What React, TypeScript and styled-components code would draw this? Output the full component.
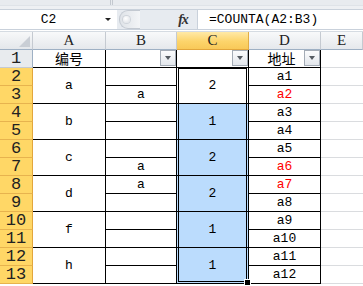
import React from "react";
import styled, { createGlobalStyle } from "styled-components";

const MONO = `"Liberation Mono", "Noto Sans CJK SC", monospace`;

const GlobalStyle = createGlobalStyle`
  html, body {
    margin: 0;
    padding: 0;
    background: #ffffff;
  }
  body {
    font-family: ${MONO};
  }
`;

const Page = styled.div`
  width: 363px;
  height: 286px;
  overflow: hidden;
  display: flex;
  flex-direction: column;
  background: #ffffff;
`;

// ribbon bottom edge
const RibbonEdge = styled.div`
  height: 9px;
  display: flex;
  flex-direction: column;
  background: #eef0f3;
`;

const RibbonGroups = styled.div`
  height: 5px;
  display: flex;
  background: #e8ebef;
  border-bottom: 1px solid #dfe3e8;
`;

const RibbonGroup = styled.div<{ $w: number }>`
  width: ${(p) => p.$w}px;
  border-right: 1px solid #c3c8cf;
  flex-shrink: 0;
`;

const FormulaBar = styled.div`
  height: 21px;
  display: flex;
  align-items: stretch;
  background: #e7ebf0;
  border-top: 1px solid #c9d1db;
  border-bottom: 1px solid #c9d1db;
  box-sizing: border-box;
`;

const NameBox = styled.div`
  width: 117px;
  display: flex;
  align-items: center;
  background: #ffffff;
  font-size: 13px;
  color: #000;
`;

const NameText = styled.span`
  flex: 1;
  text-align: center;
  padding-right: 8px;
`;

const SmallArrow = styled.span`
  width: 0;
  height: 0;
  margin-right: 6px;
  border-left: 3px solid transparent;
  border-right: 3px solid transparent;
  border-top: 3px solid #222;
`;

const Splitter = styled.div`
  width: 17px;
  margin: 0 0 0 2px;
  border-radius: 9px 0 0 9px;
  border: 1px solid #c3c9d1;
  border-right: none;
  background: linear-gradient(90deg, #dfe3e8, #f3f5f7);
  display: flex;
  align-items: center;
  justify-content: flex-start;
  padding-left: 3px;

  &::after {
    content: "";
    width: 7px;
    height: 7px;
    border-radius: 50%;
    background: radial-gradient(circle at 40% 35%, #ffffff, #d9dde3);
    box-shadow: 0 0 0 1px #cfd4da;
  }
`;

const FxButton = styled.div`
  margin-left: auto;
  width: 28px;
  display: flex;
  align-items: center;
  justify-content: center;
  font-family: "Liberation Serif", serif;
  font-style: italic;
  font-weight: bold;
  font-size: 14px;
  color: #333;
  letter-spacing: -1px;
`;

const FormulaInput = styled.div`
  width: 166px;
  display: flex;
  align-items: center;
  padding-left: 11px;
  box-sizing: border-box;
  background: #ffffff;
  border-left: 1px solid #c9d1db;
  font-size: 13px;
  color: #000;
  white-space: nowrap;
`;

const BarGap = styled.div`
  height: 2px;
  background: #ffffff;
  border-bottom: 1px solid #d5dbe2;
  box-sizing: border-box;
`;

const Sheet = styled.div`
  position: relative;
  display: grid;
  grid-template-columns: 33px 73px 71px 72px 72px 1fr;
  grid-template-rows: repeat(14, 18px);
  font-size: 12px;
`;

const Corner = styled.div`
  grid-row: 1;
  grid-column: 1;
  display: flex;
  align-items: flex-end;
  justify-content: flex-end;
  padding: 0 2px 2px 0;
  background: linear-gradient(#f7f8f9, #e4e7eb);
  border-right: 1px solid #c5cad1;
  border-bottom: 1px solid #9eb0c4;

  &::after {
    content: "";
    width: 0;
    height: 0;
    border-left: 11px solid transparent;
    border-bottom: 11px solid #c9ced5;
  }
`;

const ColHeader = styled.div<{ $active?: boolean }>`
  grid-row: 1;
  display: flex;
  align-items: center;
  justify-content: center;
  color: #222;
  font-family: "Liberation Serif", serif;
  font-size: 15px;
  background: ${(p) =>
    p.$active
      ? "linear-gradient(#ffe9a7, #fcd46b 55%, #f8c958)"
      : "linear-gradient(#f8f9fa, #e5e8ec)"};
  border-right: 1px solid ${(p) => (p.$active ? "#e1ad45" : "#c5cad1")};
  border-bottom: 1px solid ${(p) => (p.$active ? "#e2a63c" : "#9eb0c4")};
`;

const RowHeader = styled.div<{ $active?: boolean }>`
  grid-column: 1;
  display: flex;
  align-items: center;
  justify-content: center;
  color: #222;
  font-size: 17px;
  line-height: 17px;
  background: ${(p) => (p.$active ? "#ffd766" : "#e8ebee")};
  border-right: 1px solid ${(p) => (p.$active ? "#e2a63c" : "#9eb0c4")};
  border-bottom: 1px solid ${(p) => (p.$active ? "#e7b34e" : "#c5cad1")};
`;

const Cell = styled.div<{
  $row: number;
  $col: number;
  $span?: number;
  $fill?: string;
  $color?: string;
  $middle?: boolean;
}>`
  grid-row: ${(p) => p.$row + 1} / span ${(p) => p.$span || 1};
  grid-column: ${(p) => p.$col + 1};
  display: flex;
  align-items: ${(p) => (p.$middle ? "center" : "flex-end")};
  justify-content: center;
  padding-bottom: ${(p) => (p.$middle ? 0 : 1)}px;
  box-sizing: border-box;
  min-width: 0;
  font-size: 13px;
  background: ${(p) => p.$fill || "#ffffff"};
  color: ${(p) => p.$color || "#000"};
  border-right: 1px solid #000;
  border-bottom: 1px solid #000;
  white-space: nowrap;
`;

const GridCell = styled.div<{ $row: number }>`
  grid-row: ${(p) => p.$row + 1};
  grid-column: 6;
  border-bottom: 1px solid #dadcdf;
`;

const HeadCell = styled.div<{ $col: number }>`
  grid-row: 2;
  grid-column: ${(p) => p.$col + 1};
  display: flex;
  align-items: flex-start;
  border-right: 1px solid #000;
  border-bottom: 1px solid #000;
  font-size: 14px;
  font-family: "Noto Sans CJK SC", sans-serif;
  color: #000;
`;

const HeadText = styled.span<{ $shift?: number }>`
  flex: 1;
  text-align: center;
  line-height: 17px;
  padding-left: ${(p) => p.$shift || 0}px;
`;

const FilterButton = styled.span`
  width: 16px;
  height: 16px;
  box-sizing: border-box;
  flex-shrink: 0;
  border: 1px solid #a4acb6;
  background: linear-gradient(#fbfcfd, #e3e7ec);
  display: flex;
  align-items: center;
  justify-content: center;

  &::after {
    content: "";
    width: 0;
    height: 0;
    border-left: 3.5px solid transparent;
    border-right: 3.5px solid transparent;
    border-top: 4px solid #555b62;
  }
`;

const Selection = styled.div`
  grid-row: 3 / span 12;
  grid-column: 4;
  position: relative;
  margin: -1px 0 0 -1px;
  border: 3px double #000;
  border-top-width: 2px;
  border-top-style: solid;
  pointer-events: none;

  &::after {
    content: "";
    position: absolute;
    right: -5px;
    bottom: -5px;
    width: 5px;
    height: 5px;
    background: #000;
    border: 1px solid #fff;
  }
`;

const BLUE = "#bbdcfd";

const dataA = [
  { row: 2, text: "a" },
  { row: 4, text: "b" },
  { row: 6, text: "c" },
  { row: 8, text: "d" },
  { row: 10, text: "f" },
  { row: 12, text: "h" },
];

const dataB: Record<number, string> = { 3: "a", 7: "a", 8: "a" };

const dataC = [
  { row: 2, text: "2" },
  { row: 4, text: "1" },
  { row: 6, text: "2" },
  { row: 8, text: "2" },
  { row: 10, text: "1" },
  { row: 12, text: "1" },
];

const redRows = [3, 7, 8];

const rows = Array.from({ length: 13 }, (_, i) => i + 1);

const App: React.FC = () => {
  return (
    <Page>
      <GlobalStyle />
      <RibbonEdge>
        <RibbonGroups>
          <RibbonGroup $w={110} />
          <RibbonGroup $w={1} />
        </RibbonGroups>
      </RibbonEdge>
      <FormulaBar>
        <NameBox>
          <NameText>C2</NameText>
          <SmallArrow />
        </NameBox>
        <Splitter />
        <FxButton>fx</FxButton>
        <FormulaInput>=COUNTA(A2:B3)</FormulaInput>
      </FormulaBar>
      <BarGap />
      <Sheet>
        <Corner />
        {["A", "B", "C", "D", "E"].map((c, i) => (
          <ColHeader key={c} $active={c === "C"} style={{ gridColumn: i + 2 }}>
            {c}
          </ColHeader>
        ))}
        {rows.map((r) => (
          <RowHeader key={r} $active={r > 1} style={{ gridRow: r + 1 }}>
            {r}
          </RowHeader>
        ))}

        {/* header row with filters */}
        <HeadCell $col={1}>
          <HeadText>编号</HeadText>
        </HeadCell>
        <HeadCell $col={2}>
          <HeadText />
          <FilterButton />
        </HeadCell>
        <HeadCell $col={3}>
          <HeadText />
          <FilterButton />
        </HeadCell>
        <HeadCell $col={4}>
          <HeadText $shift={10}>地址</HeadText>
          <FilterButton />
        </HeadCell>

        {dataA.map((d) => (
          <Cell key={"a" + d.row} $row={d.row} $col={1} $span={2} $middle>
            {d.text}
          </Cell>
        ))}
        {rows.slice(1).map((r) => (
          <Cell key={"b" + r} $row={r} $col={2}>
            {dataB[r] || ""}
          </Cell>
        ))}
        {dataC.map((d) => (
          <Cell
            key={"c" + d.row}
            $row={d.row}
            $col={3}
            $span={2}
            $middle
            $fill={d.row === 2 ? "#ffffff" : BLUE}
          >
            {d.text}
          </Cell>
        ))}
        {rows.slice(1).map((r) => (
          <Cell
            key={"d" + r}
            $row={r}
            $col={4}
            $color={redRows.includes(r) ? "#ff0000" : "#000"}
          >
            {"a" + (r - 1)}
          </Cell>
        ))}
        {rows.map((r) => (
          <GridCell key={"e" + r} $row={r} />
        ))}
        <Selection />
      </Sheet>
    </Page>
  );
};

export default App;
